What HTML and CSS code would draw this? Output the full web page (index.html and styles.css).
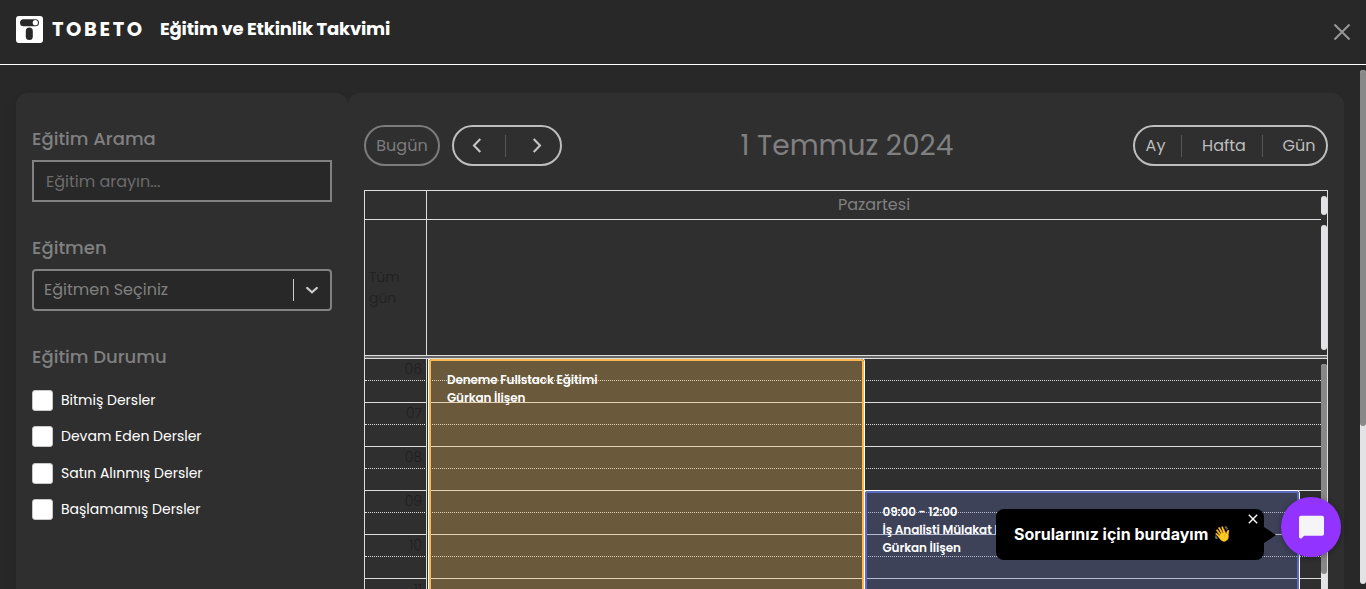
FILE: index.html
```
<!DOCTYPE html>
<html lang="tr">
<head>
<meta charset="utf-8">
<title>Eğitim ve Etkinlik Takvimi</title>
<link rel="stylesheet" href="styles.css">
</head>
<body>
<header class="header">
  <svg class="logo" width="27" height="27" viewBox="0 0 27 27">
    <rect width="27" height="27" rx="3" fill="#fff"/>
    <rect x="4" y="3.2" width="19" height="7" rx="3.5" fill="#282828"/>
    <circle cx="19.3" cy="6.7" r="2.6" fill="#fff"/>
    <rect x="9.8" y="11.6" width="7" height="12.4" rx="3.5" fill="#282828"/>
  </svg>
  <span class="wordmark">TOBETO</span>
  <h1 class="title"><span>Eğitim ve Etkinlik Takvimi</span></h1>
  <svg class="close" width="18" height="18" viewBox="0 0 18 18"><path d="M1.5 1.5l15 15M16.5 1.5l-15 15" stroke="#979797" stroke-width="2" fill="none"/></svg>
</header>
<main class="main">
  <aside class="sidebar">
    <h2 class="label">Eğitim Arama</h2>
    <div class="field search"><span>Eğitim arayın...</span></div>
    <h2 class="label">Eğitmen</h2>
    <div class="field select"><span>Eğitmen Seçiniz</span><i class="sep"></i>
      <svg class="chev" width="14" height="9" viewBox="0 0 14 9"><path d="M2.2 2L7 6.3 11.8 2" fill="none" stroke="#ccc" stroke-width="2.3" stroke-linecap="round"/></svg>
    </div>
    <h2 class="label">Eğitim Durumu</h2>
    <div class="checks">
      <div class="check"><i class="box"></i><span>Bitmiş Dersler</span></div>
      <div class="check"><i class="box"></i><span>Devam Eden Dersler</span></div>
      <div class="check"><i class="box"></i><span>Satın Alınmış Dersler</span></div>
      <div class="check"><i class="box"></i><span>Başlamamış Dersler</span></div>
    </div>
  </aside>
  <section class="calendar">
    <div class="toolbar">
      <div class="tools">
        <div class="pill today"><span>Bugün</span></div>
        <div class="pill nav">
          <svg width="10" height="15" viewBox="0 0 10 15"><path d="M8.3 1L2 7.5 8.3 14" fill="none" stroke="#c4c4c4" stroke-width="2.1"/></svg>
          <i class="divider"></i>
          <svg class="next" width="10" height="15" viewBox="0 0 10 15"><path d="M1.7 1L8 7.5 1.7 14" fill="none" stroke="#c4c4c4" stroke-width="2.1"/></svg>
        </div>
      </div>
      <div class="date"><span>1 Temmuz 2024</span></div>
      <div class="pill views"><span class="view ay">Ay</span><i class="divider"></i><span class="view hafta">Hafta</span><i class="divider"></i><span class="view gun">Gün</span></div>
    </div>
    <div class="table">
      <div class="row head"><div class="axis"></div><div class="day"><span>Pazartesi</span></div><i class="thumb thumb-head"></i></div>
      <div class="row allday"><div class="axis"><span class="all">Tüm gün</span></div><div></div><i class="thumb thumb-all"></i></div>
      <div class="rule"></div>
      <div class="slots">
        <div class="hour"><span class="num">06</span></div>
        <div class="hour"><span class="num">07</span></div>
        <div class="hour"><span class="num">08</span></div>
        <div class="hour"><span class="num">09</span></div>
        <div class="hour"><span class="num">10</span></div>
        <div class="hour"><span class="num">11</span></div>
        <div class="axisline"></div>
        <div class="event amber"><div>Deneme Fullstack Eğitimi</div><div>Gürkan İlişen</div></div>
        <div class="event indigo"><div>09:00 - 12:00</div><div>İş Analisti Mülakat H</div><div>Gürkan İlişen</div></div>
        <div class="slotbar"><i></i></div>
      </div>
    </div>
  </section>
  <div class="pagebar"><i></i></div>
</main>
<div class="bubble"><span>Sorularınız için burdayım</span><span class="wave">👋</span>
  <svg class="bubble-x" width="10" height="10" viewBox="0 0 10 10"><path d="M.8.8l8.4 8.4M9.2.8L.8 9.2" stroke="#fff" stroke-width="1.4"/></svg>
</div>
<div class="chat">
  <svg width="27" height="24" viewBox="0 0 27 24"><path d="M3 .8h21a2 2 0 0 1 2 2v16a2 2 0 0 1-2 2H6.2L3.6 23.2Q1 24 1 21.5V2.8a2 2 0 0 1 2-2z" fill="#f5f5f7"/></svg>
</div>
</body>
</html>
```
FILE: styles.css
```
* { box-sizing: border-box; }
body { margin: 0; width: 1366px; height: 589px; overflow: hidden; background: #282828; font-family: Poppins, Inter, "Open Sans", sans-serif; color: #808080; position: relative; }
h1, h2 { margin: 0; }
span { white-space: nowrap; }
.header { height: 65px; border-bottom: 1px solid #fff; display: flex; align-items: flex-start; padding: 16px 15px 0 16px; }
.wordmark { font-size: 19.5px; line-height: 28px; font-weight: 700; color: #fff; margin-left: 9px; width: 99px; letter-spacing: 2.6px; }
.title { color: #fff; font-size: 18px; line-height: 26px; font-weight: 700; margin-left: 9px; flex: 1; letter-spacing: -.19px; }
.close { margin-top: 7px; }
.main { height: 524px; padding: 28px 0 0 16px; display: flex; position: relative; }
.sidebar { width: 332px; background: #2f2f2f; border-radius: 12px 12px 0 0; padding: 32px 16px 0; box-shadow: 0 6px 12px rgba(0,0,0,.1); }
.calendar { width: 996px; background: #2f2f2f; border-radius: 12px 12px 0 0; padding: 32px 16px 0; }
.label { font-size: 18px; line-height: 27px; font-weight: 500; }
.field { height: 42px; margin: 8px 0 32px; border: 2px solid #828282; background: #282828; display: flex; align-items: center; font-size: 16px; }
.search { padding-left: 12px; color: #6c6c6c; }
.select { border-radius: 4px; padding: 0 11px 2px 10px; color: #808080; }
.sep { width: 1px; height: 22px; background: #ccc; margin: 2px 0 0 auto; }
.chev { margin: 3px 0 0 11px; }
.checks { padding-top: 12px; }
.check { height: 36.5px; display: flex; align-items: center; color: #fff; font-size: 14px; gap: 8px; }
.box { width: 21px; height: 21px; background: #fff; border: 1px solid #c8c8c8; border-radius: 3px; }
.toolbar { height: 40px; display: grid; grid-template-columns: 374px 218px 1fr; align-items: start; }
.tools { display: flex; gap: 12px; }
.pill { height: 41px; border: 2px solid #bebebe; border-radius: 20.5px; display: flex; align-items: center; font-size: 16px; color: #bebebe; }
.today { width: 76px; justify-content: center; border-color: #7c7c7c; color: #7c7c7c; }
.nav { width: 110px; padding-left: 18px; }
.nav .divider { margin-left: 23px; }
.next { margin-left: 26px; }
.divider { width: 1px; height: 22px; background: #555; }
.date { text-align: center; font-size: 28.1px; line-height: 41px; }
.views { width: 195px; justify-self: end; }
.view { text-align: center; }
.ay { width: 46px; padding-right: 5px; }
.hafta { width: 80px; padding-left: 4px; }
.gun { width: 63px; padding-left: 9px; }
.table { margin-top: 25px; border: 1px solid #ddd; border-bottom: 0; height: 399px; display: flex; flex-direction: column; overflow: hidden; }
.row { display: grid; grid-template-columns: 62px 894px 6px; }
.axis { border-right: 1px solid #ddd; }
.head { height: 29px; background: linear-gradient(#ddd, #ddd) left bottom / 956px 1px no-repeat; }
.day { text-align: center; font-size: 16px; line-height: 28px; }
.thumb { background: #e3e3e5; border-radius: 3px; }
.thumb-head { height: 19px; margin-top: 5px; }
.thumb-all { height: 125px; margin-top: 5px; }
.allday { height: 135px; }
.allday .axis { display: flex; align-items: center; padding: 2px 0 0 4px; color: #202020; font-size: 14px; line-height: 21px; font-weight: 300; }
.all { width: 40px; white-space: normal; }
.rule { height: 4px; background: #666; border-top: 1px solid #ddd; border-bottom: 1px solid #ddd; }
.slots { position: relative; height: 231px; overflow: hidden; }
.hour { height: 44px; width: 956px; border-bottom: 1px solid #ddd; position: relative; }
.hour::after { content: ""; position: absolute; left: 0; right: 0; top: 21px; border-top: 1px dotted #ddd; }
.num { display: block; width: 57px; text-align: right; color: #202020; font-size: 14px; line-height: 21px; font-weight: 300; }
.axisline { position: absolute; left: 61px; top: 0; bottom: 0; width: 3px; background: linear-gradient(90deg, #ddd 1px, #2f2f2f 1px 2px, #fff 2px); }
.event { position: absolute; font-size: 12px; line-height: 18px; font-weight: 600; letter-spacing: -.12px; white-space: nowrap; color: #fff; border-radius: 3px; }
.amber { left: 64px; top: 0; width: 435px; height: 300px; border: 2px solid #ffb74d; background: rgba(248,190,92,.3); background-clip: padding-box; padding: 10px 16px; box-shadow: 0 0 0 1px #fff; }
.indigo { left: 500px; top: 132px; width: 434px; height: 130px; border: 2px solid #5c6bc0; background: rgba(97,111,188,.3); background-clip: padding-box; padding: 10px 15.5px; box-shadow: 0 0 0 1px #fff; }
.slotbar { position: absolute; left: 956px; top: 5px; width: 6px; height: 226px; background: #e3e3e5; border-radius: 3px 3px 0 0; }
.slotbar i { display: block; height: 210px; background: #888; border-radius: 3px; }
.pagebar { position: absolute; left: 1360px; top: 5px; width: 6px; height: 514px; background: #e3e3e5; border-radius: 3px; }
.pagebar i { display: block; height: 356px; background: #888; border-radius: 3px; }
.bubble { position: absolute; left: 996px; top: 509px; width: 268px; height: 51px; border-radius: 8px; background: #000; color: #fff; display: flex; align-items: center; padding: 0 0 1px 18px; font: 700 16px Inter, sans-serif; }
.bubble::after { content: ""; position: absolute; left: 268px; top: 18px; border: 8px solid transparent; border-left: 12px solid #000; border-right: 0; }
.wave { margin-left: 5px; font: 15px "Noto Color Emoji", sans-serif; }
.bubble-x { position: absolute; left: 252px; top: 5px; }
.chat { position: absolute; left: 1281px; top: 497px; width: 60px; height: 60px; border-radius: 50%; background: #9333ff; display: flex; align-items: center; justify-content: center; box-shadow: 0 1px 6px rgba(0,0,0,.35); }
```
